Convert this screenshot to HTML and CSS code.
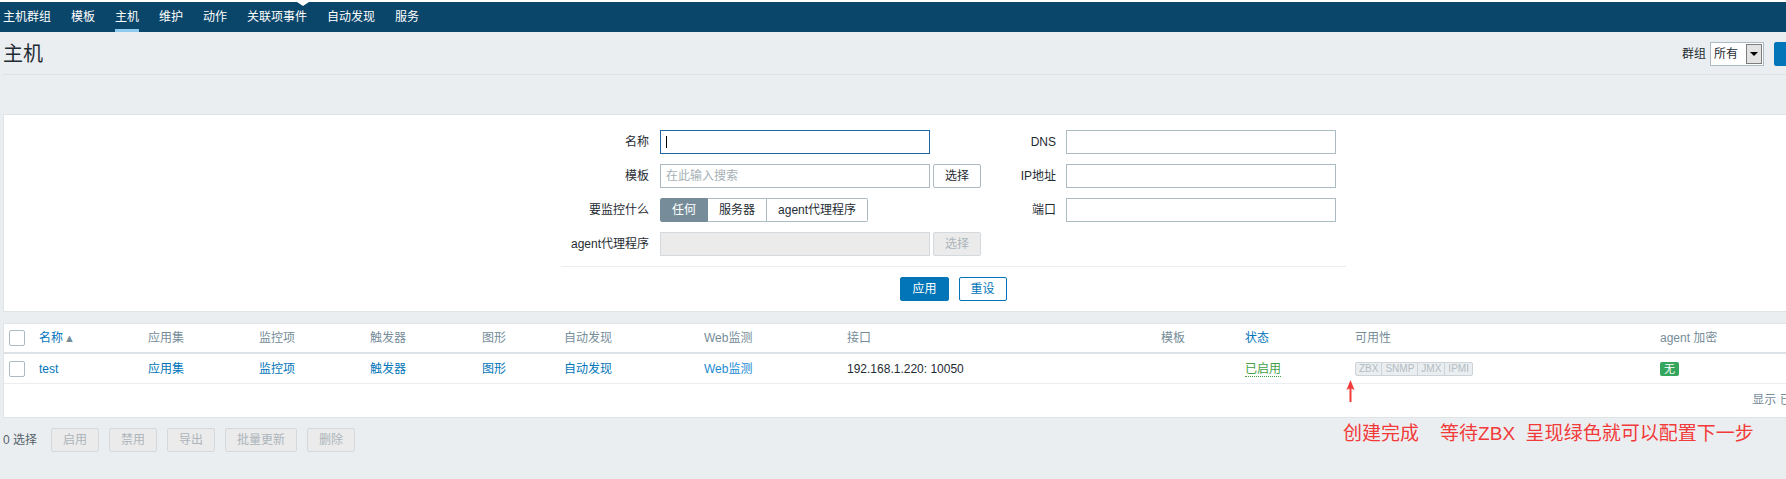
FILE: index.html
```html
<!DOCTYPE html>
<html lang="zh-CN">
<head>
<meta charset="utf-8">
<title>主机</title>
<link rel="stylesheet" href="styles.css">
</head>
<body>
<div class="page">
  <div class="topstrip"><span class="notch"></span></div>
  <nav class="subnav">
    <a href="#">主机群组</a>
    <a href="#">模板</a>
    <a href="#" class="active">主机</a>
    <a href="#">维护</a>
    <a href="#">动作</a>
    <a href="#">关联项事件</a>
    <a href="#">自动发现</a>
    <a href="#">服务</a>
  </nav>

  <header class="header">
    <h1 class="title">主机</h1>
    <div class="header-controls">
      <span class="hc-label">群组</span>
      <div class="select"><span class="select-text">所有</span><span class="select-btn"><span class="select-arrow"></span></span></div>
      <button class="btn btn-primary btn-create">创建主机</button>
      <button class="btn btn-primary">导入</button>
    </div>
  </header>

  <section class="filter">
    <div class="filter-grid">
      <label class="f-label">名称</label>
      <div class="f-ctrl"><div class="input focused"><span class="caret"></span></div></div>
      <label class="f-label">DNS</label>
      <div class="f-ctrl f-ctrl-r"><input class="input" type="text"></div>

      <label class="f-label">模板</label>
      <div class="f-ctrl"><input class="input" type="text" placeholder="在此输入搜索"><button class="btn btn-grey">选择</button></div>
      <label class="f-label">IP地址</label>
      <div class="f-ctrl f-ctrl-r"><input class="input" type="text"></div>

      <label class="f-label">要监控什么</label>
      <div class="f-ctrl">
        <div class="seg">
          <span class="seg-item on">任何</span><span class="seg-item">服务器</span><span class="seg-item">agent代理程序</span>
        </div>
      </div>
      <label class="f-label">端口</label>
      <div class="f-ctrl f-ctrl-r"><input class="input" type="text"></div>

      <label class="f-label">agent代理程序</label>
      <div class="f-ctrl"><div class="input disabled"></div><button class="btn btn-disabled">选择</button></div>
      <span></span>
      <span></span>
    </div>
    <div class="filter-divider"></div>
    <div class="filter-buttons">
      <button class="btn btn-primary">应用</button>
      <button class="btn btn-outline">重设</button>
    </div>
  </section>

  <section class="list">
    <div class="row row-head">
      <div class="cell"><span class="checkbox"></span></div>
      <div class="cell sorted">名称<span class="sort-arrow">▲</span></div>
      <div class="cell">应用集</div>
      <div class="cell">监控项</div>
      <div class="cell">触发器</div>
      <div class="cell">图形</div>
      <div class="cell">自动发现</div>
      <div class="cell">Web监测</div>
      <div class="cell">接口</div>
      <div class="cell">模板</div>
      <div class="cell sorted">状态</div>
      <div class="cell">可用性</div>
      <div class="cell">agent 加密</div>
    </div>
    <div class="row row-data">
      <div class="cell"><span class="checkbox"></span></div>
      <div class="cell"><a href="#">test</a></div>
      <div class="cell"><a href="#">应用集</a></div>
      <div class="cell"><a href="#">监控项</a></div>
      <div class="cell"><a href="#">触发器</a></div>
      <div class="cell"><a href="#">图形</a></div>
      <div class="cell"><a href="#">自动发现</a></div>
      <div class="cell"><a href="#" class="light-link">Web监测</a></div>
      <div class="cell">192.168.1.220: 10050</div>
      <div class="cell"></div>
      <div class="cell"><span class="enabled">已启用</span></div>
      <div class="cell">
        <span class="avail"><span>ZBX</span><span>SNMP</span><span>JMX</span><span>IPMI</span></span>
      </div>
      <div class="cell"><span class="enc">无</span></div>
    </div>
    <div class="list-footer">显示 已自动发现的 1 中的 1</div>
  </section>

  <div class="actions">
    <span class="sel-count">0 选择</span>
    <button class="btn btn-disabled">启用</button>
    <button class="btn btn-disabled">禁用</button>
    <button class="btn btn-disabled">导出</button>
    <button class="btn btn-disabled">批量更新</button>
    <button class="btn btn-disabled">删除</button>
  </div>

  <svg class="red-arrow" width="9" height="22" viewBox="0 0 9 22"><path d="M4.5 0 L8.5 10 L5.5 8.5 L5.5 22 L3.5 22 L3.5 8.5 L0.5 10 Z" fill="#f23a3a"/></svg>
  <div class="note">创建完成    等待ZBX  呈现绿色就可以配置下一步</div>
</div>
</body>
</html>
```
FILE: styles.css
```css
html, body {
  margin: 0;
  padding: 0;
  overflow: hidden;
  background: #ebeef0;
}
body {
  font-family: "Liberation Sans", "Noto Sans CJK SC", sans-serif;
  font-size: 12px;
  line-height: 14px;
  color: #1f2c33;
}
.page {
  width: 1907px;
  position: relative;
}
button {
  font-family: inherit;
}

/* top strip + sub navigation */
.topstrip {
  height: 2px;
  background: #ffffff;
  position: relative;
}
.notch {
  position: absolute;
  left: 297px;
  top: 2px;
  width: 0;
  height: 0;
  border-left: 6px solid transparent;
  border-right: 6px solid transparent;
  border-top: 4px solid #ffffff;
}
.subnav {
  height: 30px;
  background: #0a466a;
  display: flex;
  gap: 20px;
  padding-left: 3px;
}
.subnav a {
  color: #ffffff;
  text-decoration: none;
  line-height: 30px;
  height: 30px;
}
.subnav a.active {
  box-shadow: inset 0 -3px 0 #8ecbf0;
}

/* header */
.header {
  height: 42px;
  margin: 0 3px;
  border-bottom: 1px solid #dde2e6;
  display: flex;
  align-items: center;
  justify-content: space-between;
}
.title {
  margin: 0;
  font-size: 20px;
  line-height: 24px;
  font-weight: normal;
  color: #1f2c33;
  margin-top: 1px;
}
.header-controls {
  display: flex;
  align-items: center;
  margin-top: 2px;
}
.hc-label {
  margin-right: 4px;
}
.select {
  width: 54px;
  height: 24px;
  box-sizing: border-box;
  border: 1px solid #acbbc3;
  background: #fff;
  display: flex;
  align-items: center;
  justify-content: space-between;
  padding: 0 1px 0 3px;
  margin-right: 10px;
}
.select-btn {
  width: 16px;
  height: 20px;
  box-sizing: border-box;
  border: 1px solid #7d7d7d;
  background: #e3e3e3;
  display: flex;
  align-items: center;
  justify-content: center;
}
.select-arrow {
  width: 0;
  height: 0;
  border-left: 4px solid transparent;
  border-right: 4px solid transparent;
  border-top: 4px solid #000;
}

/* buttons */
.btn {
  height: 24px;
  box-sizing: border-box;
  padding: 0 11px;
  font-size: 12px;
  line-height: 22px;
  border: 1px solid transparent;
  border-radius: 2px;
  background: #fff;
  color: #1f2c33;
  cursor: pointer;
  white-space: nowrap;
}
.btn-primary {
  background: #0275b8;
  border-color: #0275b8;
  color: #ffffff;
}
.btn-create {
  margin-right: 10px;
}
.btn-outline {
  background: #ffffff;
  border-color: #0275b8;
  color: #0275b8;
}
.btn-grey {
  background: #ffffff;
  border-color: #acbbc3;
  color: #1f2c33;
}
.btn-disabled {
  background: #ebebeb;
  border-color: #d3d9dd;
  color: #acb5bb;
}

/* filter */
.filter {
  margin: 39px 3px 0;
  background: #ffffff;
  border: 1px solid #dfe4e7;
  padding: 15px 0 10px;
}
.filter-grid {
  width: 785px;
  margin: 0 auto;
  display: grid;
  grid-template-columns: 88px 332px 75px 290px;
  grid-auto-rows: 24px;
  row-gap: 10px;
}
.f-label {
  text-align: right;
  line-height: 24px;
  white-space: nowrap;
}
.f-ctrl {
  display: flex;
  gap: 3px;
  padding-left: 11px;
}
.f-ctrl-r {
  padding-left: 10px;
}
.input {
  width: 270px;
  height: 24px;
  box-sizing: border-box;
  border: 1px solid #acbbc3;
  background: #ffffff;
  padding: 0 5px;
  font-family: inherit;
  font-size: 12px;
  color: #1f2c33;
  margin: 0;
  outline: none;
}
.input::placeholder {
  color: #a6b0b6;
}
.input.focused {
  border-color: #1f65a6;
  display: flex;
  align-items: center;
}
.caret {
  width: 1px;
  height: 12px;
  background: #000;
}
.input.disabled {
  background: #ebebeb;
  border-color: #d3d9dd;
}
.seg {
  display: flex;
  height: 24px;
}
.seg-item {
  box-sizing: border-box;
  height: 24px;
  line-height: 22px;
  padding: 0 11px;
  border: 1px solid #acbbc3;
  border-left-width: 0;
  background: #ffffff;
  white-space: nowrap;
}
.seg-item:first-child {
  border-left-width: 1px;
  border-radius: 2px 0 0 2px;
}
.seg-item:last-child {
  border-radius: 0 2px 2px 0;
}
.seg-item.on {
  background: #768d99;
  border-color: #768d99;
  color: #ffffff;
}
.filter-divider {
  width: 785px;
  margin: 10px auto 0;
  border-top: 1px solid #ebeef0;
}
.filter-buttons {
  display: flex;
  justify-content: center;
  gap: 10px;
  margin-top: 10px;
}

/* list */
.list {
  margin: 11px 3px 0;
  background: #ffffff;
  border: 1px solid #dfe4e7;
}
.row {
  display: grid;
  grid-template-columns: 35px 109px 111px 111px 112px 82px 140px 143px 314px 84px 110px 305px 1fr;
  align-items: center;
}
.row-head {
  height: 28px;
  border-bottom: 2px solid #dde2e6;
  color: #768d99;
}
.row-data {
  height: 29px;
  border-bottom: 1px solid #ebeef0;
}
.cell {
  white-space: nowrap;
}
.cell a {
  color: #0275b8;
  text-decoration: none;
}
.cell a.light-link {
  color: #1a8ad2;
}
.sorted {
  color: #0275b8;
}
.sort-arrow {
  color: #768d99;
  font-size: 11px;
  margin-left: 1px;
}
.checkbox {
  display: block;
  width: 16px;
  height: 16px;
  box-sizing: border-box;
  border: 1px solid #acbbc3;
  border-radius: 2px;
  background: #ffffff;
  margin-left: 5px;
}
.enabled {
  color: #429e47;
  border-bottom: 1px dotted #429e47;
}
.avail {
  display: inline-flex;
  vertical-align: middle;
  border: 1px solid #cdd4d9;
  border-radius: 2px;
  background: #ebeef0;
}
.avail span {
  font-size: 10px;
  line-height: 12px;
  padding: 0 3px;
  color: #b2bcc2;
  border-left: 1px solid #cdd4d9;
}
.avail span:first-child {
  border-left: 0;
}
.enc {
  display: inline-block;
  vertical-align: middle;
  width: 19px;
  height: 14px;
  line-height: 14px;
  text-align: center;
  background: #34a65e;
  color: #ffffff;
  border-radius: 2px;
  font-size: 11px;
}
.list-footer {
  height: 33px;
  line-height: 33px;
  text-align: right;
  padding-right: 4px;
  color: #768d99;
}

/* bottom actions */
.actions {
  display: flex;
  align-items: center;
  gap: 10px;
  margin: 10px 3px 0;
}
.sel-count {
  color: #55626b;
  margin-right: 4px;
}

/* annotation overlay */
.red-arrow {
  position: absolute;
  left: 1346px;
  top: 380px;
}
.note {
  position: absolute;
  left: 1343px;
  top: 423px;
  font-size: 19px;
  line-height: 22px;
  color: #f23a3a;
  white-space: pre;
}
```
